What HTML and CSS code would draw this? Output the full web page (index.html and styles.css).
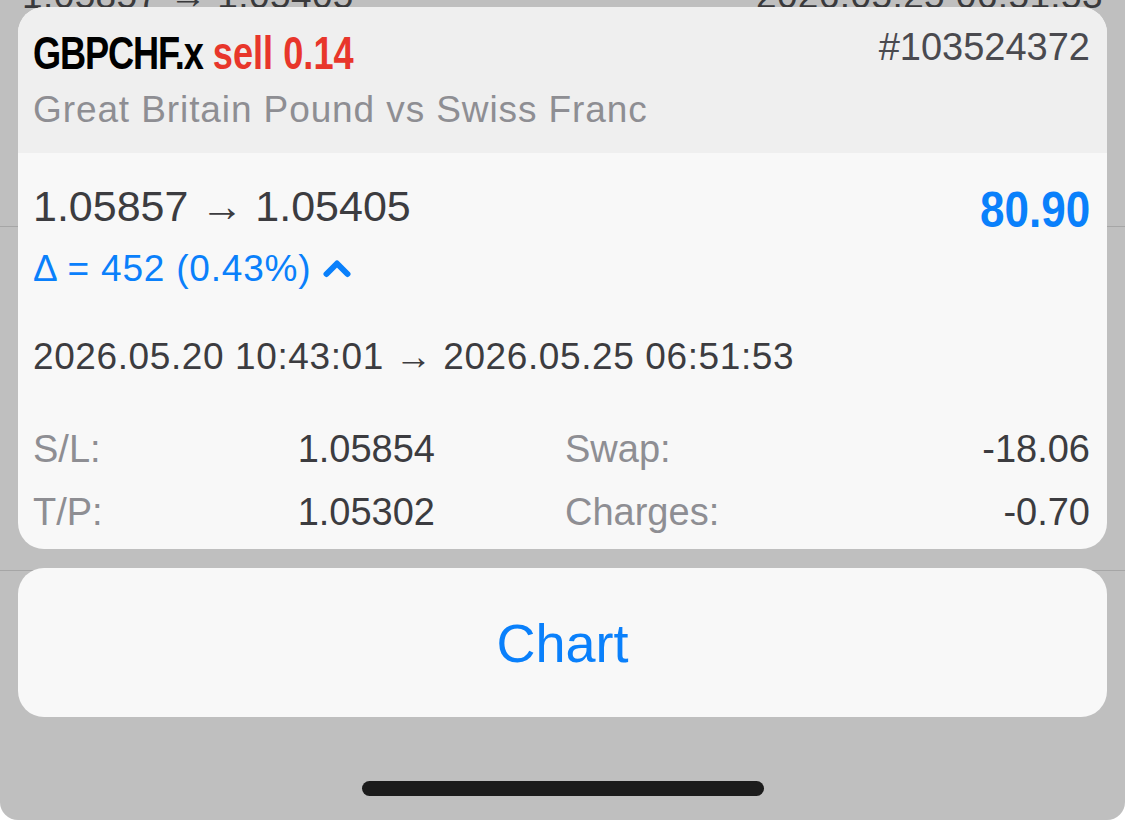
FILE: index.html
```html
<!DOCTYPE html>
<html lang="en">

<head>
    <meta charset="UTF-8">
    <meta name="viewport" content="width=device-width, initial-scale=1.0">
    <title>Position GBPCHF.x</title>
    <link rel="stylesheet" href="styles.css">
</head>

<body>

    <div class="screen">
        <!-- dimmed history list behind the sheet -->
        <div class="history">
            <div class="history-row first">
                <div class="history-line">
                    <span>1.05857 → 1.05405</span>
                    <span>2026.05.25 06:51:53</span>
                </div>
            </div>
            <div class="history-row"></div>
            <div class="history-row"></div>
        </div>

        <!-- action sheet -->
        <div class="sheet">
            <section class="card">
                <header class="card-head">
                    <div class="head-top">
                        <h1 class="title"><span class="symbol">GBPCHF.x</span> <span class="side">sell 0.14</span></h1>
                        <span class="ticket">#103524372</span>
                    </div>
                    <p class="desc">Great Britain Pound vs Swiss Franc</p>
                </header>

                <div class="card-body">
                    <div class="price-row">
                        <span class="prices">1.05857 → 1.05405</span>
                        <span class="profit">80.90</span>
                    </div>

                    <div class="delta">
                        <span>Δ = 452 (0.43%)</span>
                        <svg class="chevron" width="28" height="19" viewBox="0 0 28 19">
                            <polyline points="3.5,15 14,4.5 24.5,15" fill="none" stroke="currentColor"
                                stroke-width="6" stroke-linecap="round" stroke-linejoin="round" />
                        </svg>
                    </div>

                    <div class="times">2026.05.20 10:43:01 → 2026.05.25 06:51:53</div>

                    <div class="stats">
                        <div class="stat"><span class="label">S/L:</span><span class="value">1.05854</span></div>
                        <div class="stat"><span class="label">Swap:</span><span class="value">-18.06</span></div>
                        <div class="stat"><span class="label">T/P:</span><span class="value">1.05302</span></div>
                        <div class="stat"><span class="label">Charges:</span><span class="value">-0.70</span></div>
                    </div>
                </div>
            </section>

            <button class="chart-btn">Chart</button>

            <div class="home-bar"></div>
        </div>
    </div>

</body>

</html>
```

FILE: styles.css
```css
body {
    margin: 0;
    padding: 0;
    background: #ffffff;
    font-family: 'Liberation Sans', Arial, sans-serif;
}

.screen {
    position: relative;
    width: 1125px;
    height: 820px;
    background: #bfbfbf;
    border-radius: 0 0 18px 18px;
    overflow: hidden;
}

/* Background list */
.history {
    margin-top: -26px;
}

.history-row {
    box-sizing: border-box;
    height: 344px;
    border-bottom: 1px solid #a6a6a6;
}

.history-row.first {
    height: 253px;
}

.history-line {
    display: flex;
    justify-content: space-between;
    padding: 0 22px;
    font-size: 37px;
    line-height: 44px;
    letter-spacing: 0.4px;
    color: #3a3a3c;
}

/* Sheet */
.sheet {
    position: absolute;
    inset: 0;
    padding: 7px 18px 0;
    display: flex;
    flex-direction: column;
}

.card {
    border-radius: 26px;
    overflow: hidden;
    background: #f8f8f8;
}

.card-head {
    background: #efefef;
    padding: 20px 17px 21px 15px;
}

.head-top {
    display: flex;
    justify-content: space-between;
    align-items: flex-start;
}

/* condensed look: no narrow face installed, so squeeze the bold one */
.title {
    margin: 0;
    font-weight: bold;
    font-size: 47px;
    line-height: 52px;
    white-space: nowrap;
    transform: scaleX(0.77);
    transform-origin: left center;
}

.symbol {
    color: #000000;
    letter-spacing: -1.5px;
}

.side {
    color: #e8362b;
}

.ticket {
    font-size: 38px;
    line-height: 40px;
    color: #4a4a4f;
}

.desc {
    margin: 9px 0 0;
    font-size: 37px;
    line-height: 44px;
    letter-spacing: 0.9px;
    color: #8e8e93;
}

.card-body {
    padding: 28px 17px 14px 15px;
    color: #3c3c40;
}

.price-row {
    display: flex;
    justify-content: space-between;
    align-items: flex-start;
}

.prices {
    font-size: 43px;
    line-height: 50px;
}

.profit {
    font-weight: bold;
    font-size: 50px;
    line-height: 58px;
    color: #0a80fb;
    transform: scaleX(0.88);
    transform-origin: right center;
}

.delta {
    display: flex;
    align-items: center;
    gap: 12px;
    margin-top: 8px;
    font-size: 37px;
    line-height: 44px;
    letter-spacing: 0.8px;
    color: #0a80fb;
}

.chevron {
    margin-top: -2px;
}

.times {
    margin-top: 44px;
    font-size: 37px;
    line-height: 44px;
    letter-spacing: 0.6px;
}

.stats {
    display: grid;
    grid-template-columns: 402px 1fr;
    column-gap: 130px;
    row-gap: 17px;
    margin-top: 47px;
}

.stat {
    display: flex;
    justify-content: space-between;
    font-size: 38px;
    line-height: 46px;
}

.label {
    color: #8e8e93;
}

.value {
    color: #3c3c40;
}

/* Button */
.chart-btn {
    margin-top: 19px;
    height: 149px;
    border: none;
    border-radius: 26px;
    background: #f8f8f8;
    color: #0a80fb;
    font-family: 'Liberation Sans', Arial, sans-serif;
    font-size: 54px;
    cursor: pointer;
}

.home-bar {
    width: 402px;
    height: 15px;
    margin: 64px auto 0;
    border-radius: 8px;
    background: #1c1c1c;
}
```
